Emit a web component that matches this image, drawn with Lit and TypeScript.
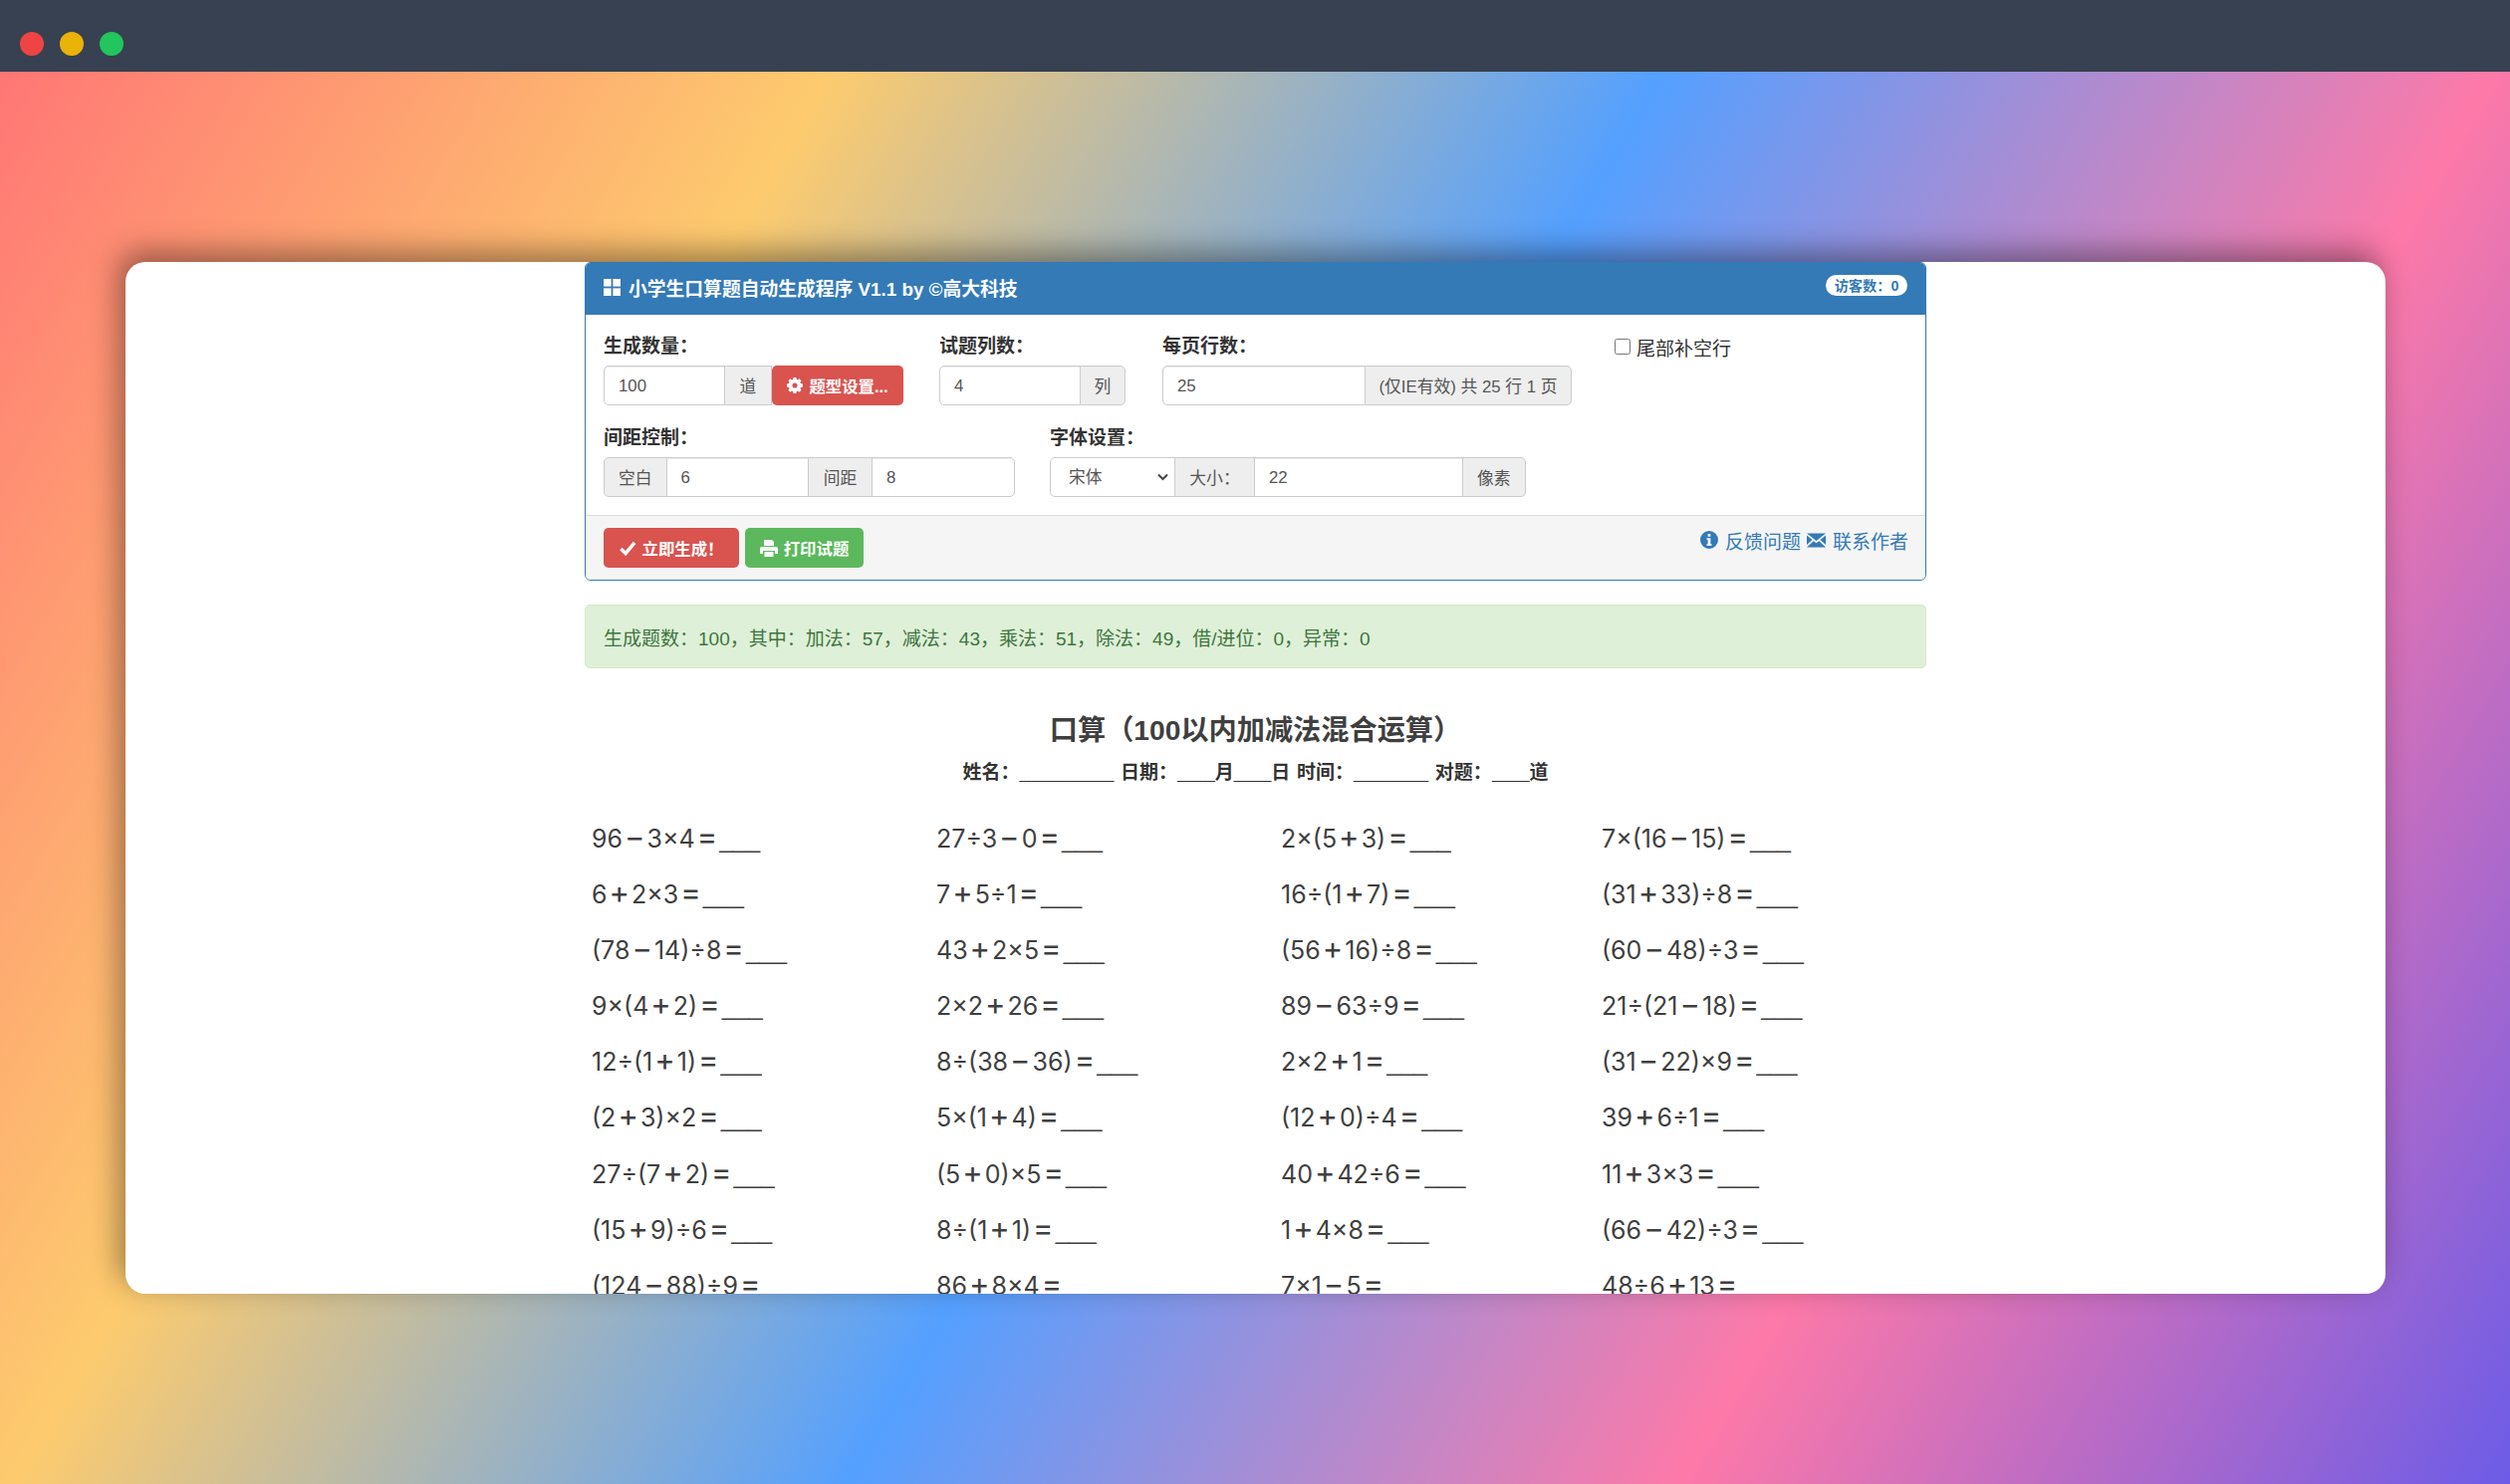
import { LitElement, html, css, svg } from "lit";
import { customElement } from "lit/decorators.js";

const COLS: string[][] = [
  ["96−3×4", "6+2×3", "(78−14)÷8", "9×(4+2)", "12÷(1+1)", "(2+3)×2", "27÷(7+2)", "(15+9)÷6", "(124−88)÷9"],
  ["27÷3−0", "7+5÷1", "43+2×5", "2×2+26", "8÷(38−36)", "5×(1+4)", "(5+0)×5", "8÷(1+1)", "86+8×4"],
  ["2×(5+3)", "16÷(1+7)", "(56+16)÷8", "89−63÷9", "2×2+1", "(12+0)÷4", "40+42÷6", "1+4×8", "7×1−5"],
  ["7×(16−15)", "(31+33)÷8", "(60−48)÷3", "21÷(21−18)", "(31−22)×9", "39+6÷1", "11+3×3", "(66−42)÷3", "48÷6+13"],
];

const iconGrid = svg`<rect x="0" y="0" width="7.6" height="7.6"/><rect x="9.4" y="0" width="7.6" height="7.6"/><rect x="0" y="9.4" width="7.6" height="7.6"/><rect x="9.4" y="9.4" width="7.6" height="7.6"/>`;
const iconCog = svg`<path fill-rule="evenodd" d="M7 0h4l.5 2.6 1.6.7L15.300 1.800 18 4.500 16.500 6.700l.7 1.600L20 9v4l-2.800.6-.7 1.600 1.500 2.300-2.700 2.700-2.200-1.500-1.600.7L11 22H7l-.5-2.600-1.600-.7-2.200 1.500L0 17.500l1.500-2.300-.7-1.600L-2 13V9l2.800-.7.7-1.600L0 4.500 2.700 1.800l2.200 1.500 1.600-.7zM9 7.500a3.500 3.500 0 1 0 0 7 3.500 3.500 0 0 0 0-7z" transform="translate(2 0)"/>`;
const iconCheck = svg`<path d="M1.500 9.500 6.500 14.500 16 3" fill="none" stroke="currentColor" stroke-width="3.600"/>`;
const iconPrint = svg`<path fill-rule="evenodd" d="M4 0h8l2 2v4H4zM1.500 7h15A1.500 1.500 0 0 1 18 8.500V14h-3v-3H3v3H0V8.500A1.500 1.500 0 0 1 1.500 7zM4.500 12h9v5h-9z"/>`;
const iconInfo = svg`<path fill-rule="evenodd" d="M9 0a9 9 0 1 1 0 18A9 9 0 0 1 9 0zM7.600 3v2.800h2.800V3zM6.500 7.300v1.400h1.100v4.600H6.500V15h5v-1.700h-1.100V7.300z"/>`;
const iconMail = svg`<path d="M0 1.500h19L9.500 9zM0 3.500v9.500l5.500-5zM19 3.500v9.500l-5.500-5zM0 15.500l6.800-6.300 2.700 2.100 2.700-2.100 6.800 6.300z"/>`;

@customElement("app-root")
export class AppRoot extends LitElement {
  static styles = css`
    :host {
      display: flex;
      flex-direction: column;
      height: 100vh;
      font-family: "Liberation Sans", "Noto Sans CJK SC", sans-serif;
      font-size: 19px;
      color: #333;
    }
    * { box-sizing: border-box; }
    .bar {
      height: 72px;
      flex: none;
      background: #374151;
      display: flex;
      gap: 16px;
      padding: 32px 0 0 20px;
    }
    .dot { width: 24px; height: 24px; border-radius: 50%; }
    .red { background: #ef4444; }
    .yellow { background: #eab308; }
    .green { background: #22c55e; }
    .stage {
      flex: 1;
      min-height: 0;
      display: flex;
      padding: 191px 125px 191px 126px;
      background: linear-gradient(120deg, #ff7675 0%, #fdcb6e 25%, #54a0ff 50%, #fd79a8 75%, #6c5ce7 100%);
    }
    .card {
      flex: 1;
      background: #fff;
      border-radius: 20px;
      overflow: hidden;
      box-shadow: -6px -10px 30px rgba(0, 0, 0, 0.4);
    }
    .container { width: 1347px; margin: 0 auto; }
    .panel {
      border: 1px solid #337ab7;
      border-radius: 6px;
      overflow: hidden;
    }
    .heading {
      height: 52px;
      background: #337ab7;
      color: #fff;
      display: flex;
      align-items: flex-start;
      justify-content: space-between;
      padding: 0 18px;
    }
    .title {
      display: flex;
      align-items: center;
      gap: 8px;
      height: 48px;
      font-weight: 700;
      font-size: 18.8px;
    }
    svg { fill: currentColor; flex: none; display: block; overflow: visible; }
    .badge {
      margin-top: 12px;
      height: 21px;
      width: 82px;
      padding-bottom: 2px;
      border-radius: 11px;
      background: #fff;
      color: #337ab7;
      font-size: 14.2px;
      font-weight: 700;
      display: flex;
      align-items: center;
      justify-content: center;
    }
    .body { padding: 18px; display: flex; flex-direction: column; gap: 19px; }
    .row { display: flex; }
    .field label.cap {
      display: block;
      height: 26px;
      line-height: 28px;
      margin-bottom: 7px;
      font-weight: 700;
    }
    .f1 { width: 301px; margin-right: 36px; }
    .f2 { width: 187px; margin-right: 37px; }
    .f3 { width: 411px; margin-right: 43px; }
    .f5 { width: 414px; margin-right: 34px; }
    .check {
      display: flex;
      align-items: center;
      gap: 6px;
      height: 28px;
    }
    .check input { width: 16px; height: 16px; margin: 0; }
    .group { display: flex; height: 40px; font-size: 16.8px; }
    .group input, .group select {
      height: 40px;
      border: 1px solid #ccc;
      background: #fff;
      color: #555;
      font: inherit;
      padding: 2px 14px 0;
      margin: 0;
      outline: none;
      min-width: 0;
      box-shadow: inset 0 1px 1px rgba(0, 0, 0, 0.075);
    }
    .group select {
      appearance: none;
      padding: 0 0 0 18px;
      box-shadow: none;
      background: #fff url("data:image/svg+xml,%3Csvg xmlns='http://www.w3.org/2000/svg' width='11' height='8' viewBox='0 0 11 8'%3E%3Cpath d='M1 1.500 5.500 6 10 1.500' fill='none' stroke='%23444' stroke-width='2'/%3E%3C/svg%3E") no-repeat right 6px center;
    }
    .group > :first-child { border-radius: 5px 0 0 5px; }
    .group > :last-child { border-radius: 0 5px 5px 0; }
    .addon {
      display: flex;
      align-items: center;
      justify-content: center;
      background: #eee;
      border: 1px solid #ccc;
      color: #555;
      white-space: pre;
      margin-left: -1px;
    }
    .group > .addon:first-child { margin-left: 0; }
    .group > .addon + input, .group > .addon + select { margin-left: -1px; }
    .w121 { width: 122px; }
    .w48 { width: 48px; }
    .w141 { width: 142px; }
    .w46 { width: 46px; }
    .w203 { width: 204px; }
    .w208 { width: 208px; }
    .w63 { width: 63.500px; }
    .w143 { width: 143.500px; }
    .w65 { width: 65px; }
    .w125 { width: 126px; }
    .w80 { width: 81px; }
    .w209 { width: 210px; }
    .btn {
      display: flex;
      align-items: center;
      justify-content: center;
      gap: 6px;
      height: 40px;
      border: 0;
      border-radius: 5px;
      color: #fff;
      font: 700 16.4px "Liberation Sans", "Noto Sans CJK SC", sans-serif;
      padding: 0;
    }
    .danger { background: #d9534f; }
    .success { background: #5cb85c; }
    .group .btn { width: 132px; border-radius: 5px; margin-left: 0; position: relative; }
    .b1 { width: 136px; }
    .b2 { width: 119px; }
    .footer {
      display: flex;
      justify-content: space-between;
      align-items: flex-start;
      background: #f5f5f5;
      border-top: 1px solid #ddd;
      padding: 12px 17px 12px 18px;
    }
    .btns { display: flex; gap: 6px; }
    .links { display: flex; align-items: center; height: 24px; color: #337ab7; gap: 6px; }
    .link { display: flex; align-items: center; gap: 7px; }
    .alert {
      margin-top: 24px;
      height: 64px;
      display: flex;
      align-items: center;
      padding: 0 18px;
      background: #dff0d8;
      border: 1px solid #d6e9c6;
      border-radius: 5px;
      color: #3c763d;
      font-size: 19px;
    }
    h1 {
      margin: 40px 0 0;
      height: 44px;
      line-height: 44px;
      font-size: 28.200px;
      font-weight: 700;
      color: #3f3f3f;
      text-align: center;
    }
    .sub {
      margin-top: 7px;
      height: 26px;
      line-height: 26px;
      text-align: center;
      font-weight: 700;
      word-spacing: 1.500px;
    }
    .sub .blank { font-size: 22.500px; }
    .sub .blank.long { font-size: 21.300px; }
    .sheet {
      margin-top: 26px;
      padding-left: 7px;
      display: grid;
      grid-template-columns: 346px 346px 322px auto;
      font-family: Inter, "Liberation Sans", sans-serif;
      font-size: 25px;
      color: #3f3f3f;
    }
    .cell { height: 56.100px; line-height: 56.100px; white-space: nowrap; }
    .op { font-size: 31px; line-height: 1; margin: 0 2px; }
    .cell .blank { font-family: "Liberation Sans", sans-serif; font-size: 24.600px; line-height: 1; }
  `;

  private formula(text: string) {
    return text
      .split(/([−+=])/)
      .map((part) => (/^[−+=]$/.test(part) ? html`<span class="op">${part}</span>` : part));
  }

  private renderCells() {
    const out = [];
    for (let r = 0; r < COLS[0].length; r++) {
      for (let c = 0; c < COLS.length; c++) {
        out.push(html`<div class="cell">${this.formula(COLS[c][r] + "=")}<span class="blank">___</span></div>`);
      }
    }
    return out;
  }

  render() {
    return html`
      <div class="bar">
        <div class="dot red"></div>
        <div class="dot yellow"></div>
        <div class="dot green"></div>
      </div>
      <div class="stage">
        <div class="card">
          <div class="container">
            <div class="panel">
              <div class="heading">
                <div class="title">
                  <svg width="17" height="17" viewBox="0 0 17 17">${iconGrid}</svg>
                  <span>小学生口算题自动生成程序 V1.1 by ©高大科技</span>
                </div>
                <div class="badge">访客数：0</div>
              </div>
              <div class="body">
                <div class="row">
                  <div class="field f1">
                    <label class="cap">生成数量：</label>
                    <div class="group">
                      <input class="w121" value="100" />
                      <span class="addon w48">道</span>
                      <button class="btn danger">
                        <svg width="16" height="16" viewBox="0 0 22 22">${iconCog}</svg>题型设置...
                      </button>
                    </div>
                  </div>
                  <div class="field f2">
                    <label class="cap">试题列数：</label>
                    <div class="group">
                      <input class="w141" value="4" />
                      <span class="addon w46">列</span>
                    </div>
                  </div>
                  <div class="field f3">
                    <label class="cap">每页行数：</label>
                    <div class="group">
                      <input class="w203" value="25" />
                      <span class="addon w208">(仅IE有效) 共 25 行 1 页</span>
                    </div>
                  </div>
                  <div class="field">
                    <label class="check"><input type="checkbox" />尾部补空行</label>
                  </div>
                </div>
                <div class="row">
                  <div class="field f5">
                    <label class="cap">间距控制：</label>
                    <div class="group">
                      <span class="addon w63">空白</span>
                      <input class="w143" value="6" />
                      <span class="addon w65">间距</span>
                      <input class="w143" value="8" />
                    </div>
                  </div>
                  <div class="field">
                    <label class="cap">字体设置：</label>
                    <div class="group">
                      <select class="w125"><option>宋体</option></select>
                      <span class="addon w80">大小：</span>
                      <input class="w209" value="22" />
                      <span class="addon w63">像素</span>
                    </div>
                  </div>
                </div>
              </div>
              <div class="footer">
                <div class="btns">
                  <button class="btn danger b1">
                    <svg width="17" height="17" viewBox="0 0 18 18">${iconCheck}</svg>立即生成！
                  </button>
                  <button class="btn success b2">
                    <svg width="18" height="17" viewBox="0 0 18 17">${iconPrint}</svg>打印试题
                  </button>
                </div>
                <div class="links">
                  <span class="link"><svg width="18" height="18" viewBox="0 0 18 18">${iconInfo}</svg>反馈问题</span>
                  <span class="link"><svg width="19" height="17" viewBox="0 0 19 17">${iconMail}</svg>联系作者</span>
                </div>
              </div>
            </div>
            <div class="alert">生成题数：100，其中：加法：57，减法：43，乘法：51，除法：49，借/进位：0，异常：0</div>
            <h1>口算（100以内加减法混合运算）</h1>
            <div class="sub">
              姓名：<span class="blank long">________</span> 日期：<span class="blank">___</span>月<span class="blank">___</span>日 时间：<span class="blank">______</span> 对题：<span class="blank">___</span>道
            </div>
            <div class="sheet">${this.renderCells()}</div>
          </div>
        </div>
      </div>
    `;
  }
}
